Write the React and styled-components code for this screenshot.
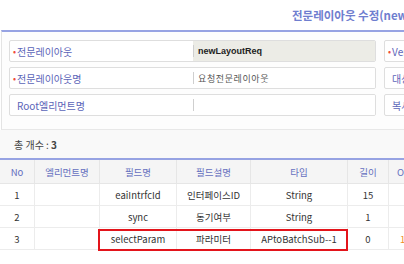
import React from 'react';
import styled, { createGlobalStyle } from 'styled-components';

const GlobalStyle = createGlobalStyle`
  html, body {
    margin: 0;
    padding: 0;
    background: #ffffff;
  }
  body {
    font-family: "Noto Sans CJK KR", "Noto Sans", sans-serif;
    color: #333;
  }
`;

const formRows = [
  {
    label: '전문레이아웃',
    required: true,
    value: 'newLayoutReq',
    readOnly: true,
    side: 'Version',
    sideRequired: true,
  },
  { label: '전문레이아웃명', required: true, value: '요청전문레이아웃', side: '대상시스템' },
  { label: 'Root엘리먼트명', value: '', side: '복사여부' },
];

const columns = [
  { title: 'No' },
  { title: '엘리먼트명' },
  { title: '필드명' },
  { title: '필드설명' },
  { title: '타입' },
  { title: '길이' },
  { title: 'Offset', left: true },
];

const COLS = '35px 65px 77px 74px 97px 41px 80px';

const fields = [
  { no: 1, element: '', name: 'eaiIntrfcId', desc: '인터페이스ID', type: 'String', len: 15, offset: '' },
  { no: 2, element: '', name: 'sync', desc: '동기여부', type: 'String', len: 1, offset: '' },
  { no: 3, element: '', name: 'selectParam', desc: '파라미터', type: 'APtoBatchSub--1', len: 0, offset: '16' },
];

export default function App() {
  return (
    <Page>
      <GlobalStyle />
      <TitleBar>
        <h1>전문레이아웃 수정(newLayoutReq)</h1>
      </TitleBar>
      <FormPanel>
        {formRows.map((row) => (
          <FormLine key={row.label}>
            <FieldBox>
              <Label required={row.required}>{row.label}</Label>
              <Value readOnly={row.readOnly}>{row.value}</Value>
            </FieldBox>
            <FieldBox>
              <Label required={row.sideRequired}>{row.side}</Label>
              <Value />
            </FieldBox>
          </FormLine>
        ))}
      </FormPanel>
      <CountBar>
        총 개수 : <strong>3</strong>
      </CountBar>
      <TableWrap>
        <HeadRow>
          {columns.map((c) => (
            <HeadCell key={c.title} left={c.left}>
              {c.title}
            </HeadCell>
          ))}
        </HeadRow>
        {fields.map((f) => (
          <BodyRow key={f.no}>
            <Cell>{f.no}</Cell>
            <Cell>{f.element}</Cell>
            <Cell>{f.name}</Cell>
            <Cell>{f.desc}</Cell>
            <Cell>{f.type}</Cell>
            <Cell>{f.len}</Cell>
            <Cell left accent>
              {f.offset}
            </Cell>
          </BodyRow>
        ))}
        <Highlight />
      </TableWrap>
    </Page>
  );
}

const Page = styled.div`
  width: 404px;
  height: 264px;
  overflow: hidden;
  background: #fff;
`;

const TitleBar = styled.div`
  height: 30px;
  padding-left: 292px;
  display: flex;
  align-items: center;
  white-space: nowrap;
  h1 {
    margin: 0;
    font-size: 11.5px;
    font-weight: 700;
    color: #6f7ecf;
  }
`;

const FormPanel = styled.div`
  border-top: 2px solid #97a3e3;
  border-left: 1px solid #e4e4e4;
  border-bottom: 1px solid #e8e8e8;
  margin-left: 1px;
  padding: 8px 0 13px 7px;
  display: flex;
  flex-direction: column;
  gap: 5px;
  background: #fdfdfd;
`;

const FormLine = styled.div`
  display: grid;
  grid-template-columns: 367px 200px;
  gap: 8px;
`;

const FieldBox = styled.div`
  height: 22px;
  box-sizing: border-box;
  border: 1px solid #dedede;
  border-radius: 2px;
  display: flex;
  background: #fff;
  overflow: hidden;
`;

const Label = styled.div`
  width: 183px;
  flex: none;
  display: flex;
  align-items: center;
  padding-left: ${(p) => (p.required ? '3px' : '7px')};
  box-sizing: border-box;
  font-size: 10px;
  color: #5b64b8;
  white-space: nowrap;
  &::before {
    content: ${(p) => (p.required ? "'•'" : 'none')};
    color: #f04a3a;
    font-size: 9px;
    margin-right: 1px;
  }
`;

const Value = styled.div`
  flex: 1;
  position: relative;
  display: flex;
  align-items: center;
  padding-left: 5px;
  background: ${(p) => (p.readOnly ? '#ecece6' : '#fff')};
  font-family: ${(p) => (p.readOnly ? '"Liberation Sans", Arial, sans-serif' : 'inherit')};
  font-weight: ${(p) => (p.readOnly ? 700 : 400)};
  font-size: 9px;
  letter-spacing: ${(p) => (p.readOnly ? '0' : '0.6px')};
  color: ${(p) => (p.readOnly ? '#222' : '#555')};
  white-space: nowrap;
  &::before {
    content: '';
    position: absolute;
    left: 0;
    top: 4px;
    bottom: 4px;
    width: 1px;
    background: #cfcfcf;
  }
`;

const CountBar = styled.div`
  height: 28px;
  display: flex;
  align-items: center;
  padding-left: 14px;
  font-size: 10px;
  color: #444;
  background: #f9f9f9;
  strong {
    font-weight: 700;
    margin-left: 2px;
  }
`;

const TableWrap = styled.div`
  position: relative;
  width: 469px;
  border-top: 2px solid #97a3e3;
`;

const HeadRow = styled.div`
  display: grid;
  grid-template-columns: ${COLS};
  height: 24px;
  box-sizing: border-box;
  background: #f5f5f5;
  border-bottom: 1px solid #e6e6e6;
`;

const BodyRow = styled.div`
  display: grid;
  grid-template-columns: ${COLS};
  height: 22px;
  box-sizing: border-box;
  border-bottom: 1px solid #ececec;
`;

const HeadCell = styled.div`
  display: flex;
  align-items: center;
  justify-content: ${(p) => (p.left ? 'flex-start' : 'center')};
  padding-left: ${(p) => (p.left ? '8px' : '0')};
  border-right: 1px solid #e6e6e6;
  font-size: 9.5px;
  color: #6570bf;
  white-space: nowrap;
  overflow: hidden;
`;

const Cell = styled.div`
  display: flex;
  align-items: center;
  justify-content: ${(p) => (p.left ? 'flex-start' : 'center')};
  padding-left: ${(p) => (p.left ? '11px' : '0')};
  border-right: 1px solid #ececec;
  font-size: 9.5px;
  color: ${(p) => (p.accent ? '#f08c1e' : '#333')};
  white-space: nowrap;
  overflow: hidden;
`;

const Highlight = styled.div`
  position: absolute;
  left: 98px;
  top: 69px;
  width: 250px;
  height: 22px;
  border: 2px solid #e3141b;
  box-sizing: border-box;
  pointer-events: none;
`;
